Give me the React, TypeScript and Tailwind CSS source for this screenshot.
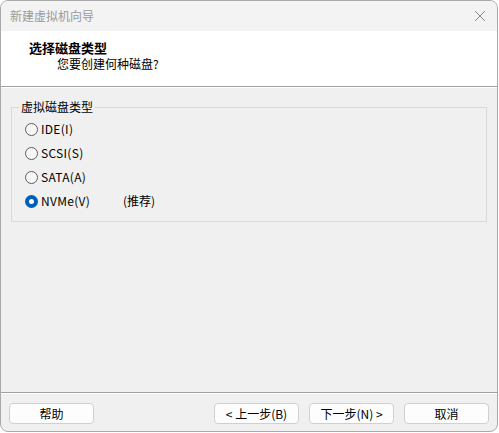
const font = { fontFamily: '"Noto Sans CJK SC", "Noto Sans", sans-serif' };

const options = [
  { label: 'IDE(I)', checked: false },
  { label: 'SCSI(S)', checked: false },
  { label: 'SATA(A)', checked: false },
  { label: 'NVMe(V)', checked: true, note: '(推荐)' },
];

function Radio({ checked }: { checked: boolean }) {
  if (checked) {
    return (
      <span className="flex h-[13px] w-[13px] items-center justify-center rounded-full bg-[#005fb8]">
        <span className="h-[5px] w-[5px] rounded-full bg-white" />
      </span>
    );
  }
  return <span className="h-[13px] w-[13px] rounded-full border border-[#5c5c5c] bg-[#f6f6f6]" />;
}

function Button({ children }: { children: React.ReactNode }) {
  return (
    <button className="flex h-[21px] w-[85px] items-center justify-center rounded-[4px] border border-[#d0d0d0] bg-[#fdfdfd] text-[12px] leading-none text-black">
      {children}
    </button>
  );
}

export default function App() {
  return (
    <div className="h-[433px] w-[499px] bg-white" style={font}>
      <div className="flex h-[432px] w-[498px] flex-col overflow-hidden rounded-[8px] border border-[#a9a9a9] bg-[#f0f0f0]">
        {/* Title bar */}
        <div className="flex h-[30px] items-center justify-between bg-[#f3f3f3] pl-[9px] pr-[9px]">
          <span className="text-[12px] text-[#9a9a9a]">新建虚拟机向导</span>
          <svg width="12" height="12" viewBox="0 0 12 12" className="mr-[2px]">
            <path d="M1 1 L11 11 M11 1 L1 11" stroke="#8a8a8a" strokeWidth="1" fill="none" />
          </svg>
        </div>

        {/* Header */}
        <div className="h-[55px] bg-white pt-[8px]">
          <div className="pl-[28px] text-[13px] font-bold leading-[17px] text-black">选择磁盘类型</div>
          <div className="pl-[56px] text-[12px] leading-[16px] text-black">您要创建何种磁盘?</div>
        </div>
        <div className="h-[2px] border-t border-b border-t-[#a0a0a0] border-b-white" />

        {/* Body */}
        <div className="h-[304px] px-[10px] pt-[11px]">
          <fieldset className="m-0 border border-[#d9d9d9] px-[13px] pb-[8px] pt-[2px]">
            <legend className="ml-[-6px] px-[2px] text-[12px] leading-[16px] text-black">虚拟磁盘类型</legend>
            {options.map((o) => (
              <div key={o.label} className="flex h-[24px] items-center">
                <Radio checked={o.checked} />
                <span className="ml-[3px] w-[82px] text-[12px] tracking-[0.3px] text-black">{o.label}</span>
                {o.note && <span className="text-[12px] text-black">{o.note}</span>}
              </div>
            ))}
          </fieldset>
        </div>

        <div className="h-[2px] border-t border-b border-t-[#a0a0a0] border-b-white" />

        {/* Footer */}
        <div className="flex flex-1 justify-between px-[8px] pt-[9px]">
          <Button>帮助</Button>
          <div className="flex gap-[10px]">
            <Button>&lt; 上一步(B)</Button>
            <Button>下一步(N) &gt;</Button>
            <Button>取消</Button>
          </div>
        </div>
      </div>
    </div>
  );
}
